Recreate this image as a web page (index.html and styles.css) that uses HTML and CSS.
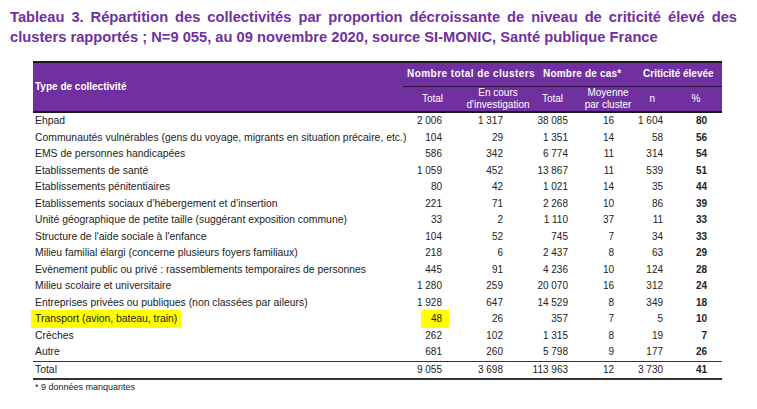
FILE: index.html
```html
<!DOCTYPE html>
<html lang="fr">
<head>
<meta charset="utf-8">
<link rel="stylesheet" href="styles.css">
</head>
<body>
<h1 class="title">Tableau 3. Répartition des collectivités par proportion décroissante de niveau de criticité élevé des clusters rapportés ; N=9 055, au 09 novembre 2020, source SI-MONIC, Santé publique France</h1>
<div class="wrap">
<table class="tbl">
<colgroup>
<col class="c1"><col class="c2"><col class="c3"><col class="c4"><col class="c5"><col class="c6"><col class="c7">
</colgroup>
<thead>
<tr class="h1">
<th rowspan="2" class="type">Type de collectivité</th>
<th colspan="2" class="g g1">Nombre total de clusters</th>
<th colspan="2" class="g g2">Nombre de cas*</th>
<th colspan="2" class="g g3">Criticité élevée</th>
</tr>
<tr class="h2">
<th class="s2">Total</th>
<th class="s3"><span class="ov">En cours<br>d'investigation</span></th>
<th class="s4">Total</th>
<th class="s5"><span class="ov">Moyenne<br>par cluster</span></th>
<th class="s6">n</th>
<th class="s7">%</th>
</tr>
</thead>
<tbody>
<tr><td>Ehpad</td><td>2 006</td><td>1 317</td><td>38 085</td><td>16</td><td>1 604</td><td>80</td></tr>
<tr><td>Communautés vulnérables (gens du voyage, migrants en situation précaire, etc.)</td><td>104</td><td>29</td><td>1 351</td><td>14</td><td>58</td><td>56</td></tr>
<tr><td>EMS de personnes handicapées</td><td>586</td><td>342</td><td>6 774</td><td>11</td><td>314</td><td>54</td></tr>
<tr><td>Etablissements de santé</td><td>1 059</td><td>452</td><td>13 867</td><td>11</td><td>539</td><td>51</td></tr>
<tr><td>Etablissements pénitentiaires</td><td>80</td><td>42</td><td>1 021</td><td>14</td><td>35</td><td>44</td></tr>
<tr><td>Etablissements sociaux d’hébergement et d’insertion</td><td>221</td><td>71</td><td>2 268</td><td>10</td><td>86</td><td>39</td></tr>
<tr><td>Unité géographique de petite taille (suggérant exposition commune)</td><td>33</td><td>2</td><td>1 110</td><td>37</td><td>11</td><td>33</td></tr>
<tr><td>Structure de l'aide sociale à l'enfance</td><td>104</td><td>52</td><td>745</td><td>7</td><td>34</td><td>33</td></tr>
<tr><td>Milieu familial élargi (concerne plusieurs foyers familiaux)</td><td>218</td><td>6</td><td>2 437</td><td>8</td><td>63</td><td>29</td></tr>
<tr><td>Evènement public ou privé : rassemblements temporaires de personnes</td><td>445</td><td>91</td><td>4 236</td><td>10</td><td>124</td><td>28</td></tr>
<tr><td>Milieu scolaire et universitaire</td><td>1 280</td><td>259</td><td>20 070</td><td>16</td><td>312</td><td>24</td></tr>
<tr><td>Entreprises privées ou publiques (non classées par aileurs)</td><td>1 928</td><td>647</td><td>14 529</td><td>8</td><td>349</td><td>18</td></tr>
<tr><td><span class="hl">Transport (avion, bateau, train)</span></td><td><span class="hl hln">48</span></td><td>26</td><td>357</td><td>7</td><td>5</td><td>10</td></tr>
<tr><td>Crèches</td><td>262</td><td>102</td><td>1 315</td><td>8</td><td>19</td><td>7</td></tr>
<tr><td>Autre</td><td>681</td><td>260</td><td>5 798</td><td>9</td><td>177</td><td>26</td></tr>
<tr class="total"><td>Total</td><td>9 055</td><td>3 698</td><td>113 963</td><td>12</td><td>3 730</td><td>41</td></tr>
</tbody>
</table>
<p class="note">* 9 données manquantes</p>
</div>
</body>
</html>
```
FILE: styles.css
```css
html, body {
  margin: 0;
  padding: 0;
  background: #ffffff;
}
body {
  font-family: "Liberation Sans", Arial, sans-serif;
  width: 757px;
  height: 409px;
  overflow: hidden;
}
.title {
  margin: 0;
  padding: 7px 20px 0 10px;
  font-size: 14.7px;
  line-height: 20px;
  font-weight: bold;
  color: #7030a0;
  text-align: justify;
}
.wrap {
  margin: 14px 0 0 33px;
  width: 689px;
}
.tbl {
  border-collapse: collapse;
  table-layout: fixed;
  width: 689px;
  font-size: 10px;
  color: #222222;
}
.c1 { width: 370px; }
.c2 { width: 47px; }
.c3 { width: 80px; }
.c4 { width: 42px; }
.c5 { width: 56px; }
.c6 { width: 42px; }
.c7 { width: 52px; }

thead {
  background: #7030a0;
  color: #ffffff;
}
thead th {
  padding: 0;
  font-size: 10px;
  white-space: nowrap;
  line-height: 12px;
}
.h1 {
  height: 24px;
  border-top: 2px solid #1a1a1a;
}
.h2 {
  height: 26px;
  border-bottom: 2px solid #1a1a1a;
}
.type {
  text-align: left;
  padding-left: 2px;
  font-weight: bold;
}
.g {
  text-align: left;
  font-weight: bold;
  border-bottom: 1px solid #2e1244;
}
.g1 { padding-left: 4px; letter-spacing: 0.45px; }
.g2 { padding-left: 13px; letter-spacing: 0.2px; }
.g3 { padding-left: 15px; }
.h2 th { font-weight: normal; }
.s2 { text-align: right; padding-right: 7px; }
.s3 { text-align: center; padding-left: 16px; }
.s4 { text-align: right; padding-right: 9px; }
.s5 { text-align: center; padding-left: 16px; }
.s6 { text-align: right; padding-right: 15px; }
.s7 { text-align: center; }
.ov {
  display: inline-block;
  margin: 0 -20px;
}

tbody td {
  height: 16.5px;
  padding: 0;
  line-height: 12px;
  white-space: nowrap;
  text-align: right;
}
tbody td:first-child {
  text-align: left;
  padding-left: 2px;
  font-size: 10.4px;
}
tbody td:nth-child(2) { padding-right: 8px; }
tbody td:nth-child(3) { padding-right: 27px; }
tbody td:nth-child(4) { padding-right: 4px; }
tbody td:nth-child(5) { padding-right: 14px; }
tbody td:nth-child(6) { padding-right: 7px; }
tbody td:nth-child(7) { padding-right: 15px; font-weight: bold; }
.total {
  border-top: 1px solid #333333;
  border-bottom: 2px solid #333333;
}
.hl {
  background: #ffff00;
  display: inline-block;
  padding: 3px 4px;
  margin: -3px 0 -3px -4px;
}
.hln {
  padding: 3px 7px 3px 10px;
  margin: -3px -7px -3px 0;
}
.note {
  margin: 2px 0 0 2px;
  font-size: 9px;
  line-height: 11px;
  color: #222222;
}
```
